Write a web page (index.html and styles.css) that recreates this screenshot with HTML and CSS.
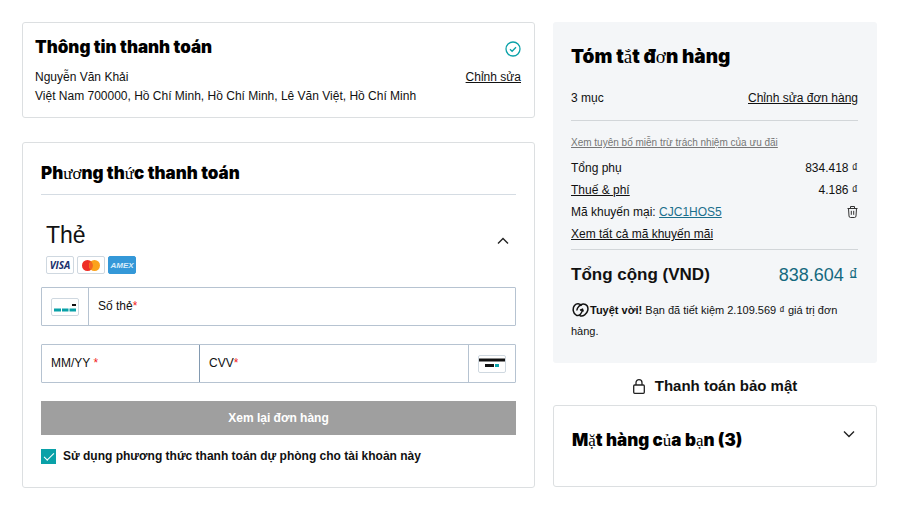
FILE: index.html
```html
<!DOCTYPE html>
<html lang="vi">
<head>
  <meta charset="UTF-8" />
  <meta name="viewport" content="width=device-width, initial-scale=1.0"/>
  <title>Thanh toán</title>
  <link rel="stylesheet" href="styles.css">
</head>
<body>

  <main class="checkout">
    <div class="left">

      <section class="card billing">
        <div class="billing-head">
          <h2>Thông tin thanh toán</h2>
          <svg class="check-icon" viewBox="0 0 16 16" width="16" height="16">
            <circle cx="8" cy="8" r="7"/>
            <path d="M5 8.3l2.1 2L11 6.2"/>
          </svg>
        </div>
        <div class="billing-row">
          <span>Nguyễn Văn Khải</span>
          <a href="#">Chỉnh sửa</a>
        </div>
        <div class="billing-row">Việt Nam 700000, Hồ Chí Minh, Hồ Chí Minh, Lê Văn Việt, Hồ Chí Minh</div>
      </section>

      <section class="card payment">
        <h2>Ph<span class="alt">ươ</span>ng th<span class="alt">ứ</span>c thanh toán</h2>

        <div class="method">
          <div>
            <h3>Thẻ</h3>
            <div class="brands">
              <span class="brand visa">VISA</span>
              <span class="brand">
                <svg viewBox="0 0 18 11" width="18" height="11">
                  <circle cx="5.5" cy="5.5" r="5.5" fill="#ee2d25"/>
                  <circle cx="12.5" cy="5.5" r="5.5" fill="#fba31c"/>
                  <path d="M9 1.3a5.500 5.500 0 0 1 0 8.400a5.500 5.500 0 0 1 0-8.400z" fill="#f26522"/>
                </svg>
              </span>
              <span class="brand amex">AMEX</span>
            </div>
          </div>
          <button type="button" class="toggle" aria-label="Thu gọn">
            <svg class="chevron" viewBox="0 0 12 8" width="12" height="8"><path d="M1 6.500l5-5 5 5"/></svg>
          </button>
        </div>

        <form>
          <div class="fields">
            <span class="field-icon">
              <svg viewBox="0 0 28 18" width="28" height="18">
                <rect x=".5" y=".5" width="27" height="17" rx="1.500" fill="#fff" stroke="#cfd8e0"/>
                <path d="M21 7h4" stroke="#111" stroke-width="2"/>
                <path d="M3 12h7M11 12h6.500M18.500 12h6.500" stroke="#09a1a8" stroke-width="3"/>
              </svg>
            </span>
            <div class="field">
              <label for="number">Số thẻ<b>*</b></label>
              <input type="text" id="number" inputmode="numeric" />
            </div>
          </div>

          <div class="fields">
            <div class="field expiry">
              <label for="expiry">MM/YY <b>*</b></label>
              <input type="text" id="expiry" inputmode="numeric" />
            </div>
            <div class="field">
              <label for="cvv">CVV<b>*</b></label>
              <input type="text" id="cvv" inputmode="numeric" />
            </div>
            <span class="field-icon">
              <svg viewBox="0 0 28 18" width="28" height="18">
                <rect x=".5" y=".5" width="27" height="17" rx="1.500" fill="#fff" stroke="#cfd8e0"/>
                <path d="M1 5h26" stroke="#111" stroke-width="3"/>
                <path d="M7 10.500h9" stroke="#111" stroke-width="3"/>
                <path d="M17 10.500h4" stroke="#09a1a8" stroke-width="3"/>
              </svg>
            </span>
          </div>

          <button type="submit" class="review">Xem lại đơn hàng</button>

          <div class="backup">
            <input type="checkbox" id="backup" checked />
            <label for="backup">Sử dụng phương thức thanh toán dự phòng cho tài khoản này</label>
          </div>
        </form>
      </section>
    </div>

    <div class="right">

      <section class="summary">
        <h1>Tóm t<span class="alt">ắ</span>t đ<span class="alt">ơ</span>n hàng</h1>
        <div class="row items">
          <span>3 mục</span>
          <a href="#">Chỉnh sửa đơn hàng</a>
        </div>

        <div class="prices">
          <a href="#" class="disclaimer">Xem tuyên bố miễn trừ trách nhiệm của ưu đãi</a>
          <div class="row"><span>Tổng phụ</span><span>834.418 ₫</span></div>
          <div class="row"><a href="#">Thuế &amp; phí</a><span>4.186 ₫</span></div>
          <div class="row">
            <span>Mã khuyến mại: <a href="#" class="promo">CJC1HOS5</a></span>
            <button type="button" class="remove" aria-label="Xóa">
              <svg viewBox="0 0 11 12" width="11" height="12">
                <path d="M.5 2.500h10M3.500 2.500v-2h4v2M1.500 2.500l.5 7.500q.1 1.500 1.500 1.500h4q1.400 0 1.500-1.500l.5-7.500M4.300 4.800v4M6.700 4.800v4"/>
              </svg>
            </button>
          </div>
          <div class="row"><a href="#">Xem tất cả mã khuyến mãi</a></div>
        </div>

        <div class="row total">
          <strong>Tổng cộng (VND)</strong>
          <span>838.604 ₫</span>
        </div>
        <p class="savings">
          <svg viewBox="0 0 17 14" width="17" height="14">
            <path d="M9.500 2.800C8 .3 4.500.2 2.500 2.500.2 5.500 1 10.300 4.300 12.200 7.500 13.500 10 10 10.500 6.500M4.800 7.500C5.200 4.500 8 1.300 11 .9c3.700-.2 5.600 3 4.700 6.600-.9 3.600-4.500 6.300-7.900 5.200M8 7.200l2.500-1 .8 2.300"/>
          </svg><b>Tuyệt vời!</b> Bạn đã tiết kiệm 2.109.569 ₫ giá trị đơn hàng.
        </p>
      </section>

      <div class="secure">
        <svg viewBox="0 0 12 15" width="12" height="15">
          <rect x=".7" y="6" width="10.600" height="8.300" rx="1"/>
          <path d="M3 6V3.700a3 3 0 0 1 6 0V6"/>
        </svg>
        Thanh toán bảo mật
      </div>

      <section class="card basket">
        <h2>M<span class="alt">ặ</span>t hàng c<span class="alt">ủ</span>a b<span class="alt">ạ</span>n (3)</h2>
        <button type="button" class="toggle" aria-label="Mở rộng">
          <svg class="chevron" viewBox="0 0 12 8" width="12" height="8"><path d="M1 1.500l5 5 5-5"/></svg>
        </button>
      </section>
    </div>
  </main>

</body>
</html>
```
FILE: styles.css
```css
* {
  box-sizing: border-box;
}

body {
  margin: 0;
  padding: 22px 23px 22px 22px;
  font-family: "Liberation Sans", Arial, sans-serif;
  font-size: 12px;
  line-height: 19px;
  color: #111;
  background-color: #fff;
}

h1, h2, h3, p {
  margin: 0;
}

h1, h2 {
  font-family: Inter, Arial, sans-serif;
  font-weight: 900;
  font-size: 17px;
  line-height: 20px;
  color: #000;
}

h1 {
  font-size: 19px;
  line-height: 24px;
}

a {
  color: #111;
}

button {
  font-family: inherit;
  border: none;
  cursor: pointer;
}

svg {
  fill: none;
  stroke-linecap: butt;
}

.alt {
  font-family: "Liberation Serif", serif;
  font-weight: normal;
  line-height: 1;
}

.checkout {
  display: grid;
  grid-template-columns: minmax(0, 1fr) 324px;
  gap: 18px;
  align-items: start;
}

.card {
  border: 1px solid #dcdfe1;
  border-radius: 3px;
}

/* billing */
.billing {
  padding: 14px 13px 11px 12px;
  margin-bottom: 24px;
}

.billing-head {
  display: flex;
  justify-content: space-between;
  margin-bottom: 11px;
}

.billing-row {
  display: flex;
  justify-content: space-between;
}

.check-icon {
  margin-top: 4px;
  stroke: #09a1a8;
  stroke-width: 1.3;
}

/* payment */
.payment {
  padding: 20px 18px 21px;
}

.payment h2 {
  padding-bottom: 11px;
  border-bottom: 1px solid #d5dce3;
}

.method {
  display: flex;
  justify-content: space-between;
  align-items: flex-start;
  padding: 26px 7px 13px 5px;
}

.method h3 {
  font-weight: normal;
  font-size: 23px;
  line-height: 28px;
  margin-bottom: 7px;
}

.method .toggle {
  margin-top: 16px;
}

.brands {
  display: flex;
  gap: 3px;
}

.brand {
  display: flex;
  align-items: center;
  justify-content: center;
  width: 28px;
  height: 18px;
  border: 1px solid #cfd8e0;
  border-radius: 2px;
  background-color: #fff;
}

.visa {
  font-family: "Open Sans", sans-serif;
  font-size: 10px;
  font-weight: 700;
  font-style: italic;
  color: #1a2f6c;
}

.amex {
  font-size: 8px;
  font-weight: bold;
  font-style: italic;
  color: #d9edfa;
  background-color: #3498d8;
  border-color: #3498d8;
}

.toggle {
  display: flex;
  padding: 0;
  background: none;
}

.chevron {
  stroke: #222;
  stroke-width: 1.4;
}

.fields {
  display: flex;
  height: 39px;
  margin-bottom: 18px;
  border: 1px solid #b6c3d1;
  border-radius: 1px;
}

.fields > * + * {
  border-left: 1px solid #b6c3d1;
}

.field-icon {
  box-sizing: content-box;
  display: flex;
  align-items: center;
  justify-content: center;
  width: 46px;
}

.field {
  display: flex;
  align-items: center;
  flex: 1;
  min-width: 0;
  padding: 0 9px;
}

.expiry {
  flex: 0 0 157px;
}

.expiry + .field {
  border-left-color: #8299b0;
}

.field label {
  white-space: pre;
}

.field b {
  font-weight: normal;
  color: #f21d1d;
}

.field input {
  flex: 1;
  min-width: 0;
  border: none;
  outline: none;
  padding: 0;
  font: inherit;
}

.review {
  display: block;
  width: 100%;
  height: 34px;
  font-size: 12px;
  font-weight: bold;
  color: #fff;
  background-color: #9f9f9f;
}

.backup {
  display: flex;
  align-items: center;
  gap: 7px;
  margin-top: 12px;
  font-weight: bold;
}

.backup input {
  appearance: none;
  display: grid;
  place-items: center;
  width: 15px;
  height: 15px;
  margin: 0;
  border: 1px solid #09a1a8;
}

.backup input:checked {
  background-color: #09a1a8;
}

.backup input:checked::before {
  content: "";
  width: 9px;
  height: 4px;
  margin-bottom: 3px;
  border-left: 1px solid #fff;
  border-bottom: 1px solid #fff;
  transform: rotate(-45deg);
}

/* order summary */
.summary {
  padding: 23px 19px 21px 18px;
  background-color: #f4f6f8;
  border-radius: 3px;
}

.row {
  display: flex;
  justify-content: space-between;
  align-items: center;
  line-height: 22px;
}

.items {
  padding: 18px 0 11px;
  border-bottom: 1px solid #d2d6d9;
}

.prices {
  padding: 12px 0 4px;
  border-bottom: 1px solid #d2d6d9;
}

.disclaimer {
  display: block;
  margin-bottom: 5px;
  font-size: 10px;
  color: #767676;
}

.promo {
  color: #1b6f8c;
}

.remove {
  display: flex;
  padding: 0;
  background: none;
}

.remove svg {
  stroke: #333;
}

.total {
  padding: 14px 0;
  font-size: 18px;
}

.total strong {
  font-size: 17px;
}

.total span {
  color: #14697f;
}

.savings {
  font-size: 11px;
  line-height: 21px;
}

.savings svg {
  margin: 0 1px;
  vertical-align: -3px;
  stroke: #111;
  stroke-width: 1.5;
}

.secure {
  display: flex;
  align-items: center;
  justify-content: center;
  gap: 10px;
  padding: 13px 0 9px;
  font-size: 15px;
  font-weight: bold;
  line-height: 20px;
}

.secure svg {
  stroke: #222;
  stroke-width: 1.3;
}

.basket {
  display: flex;
  justify-content: space-between;
  align-items: flex-start;
  padding: 24px 21px 36px 18px;
}
```
